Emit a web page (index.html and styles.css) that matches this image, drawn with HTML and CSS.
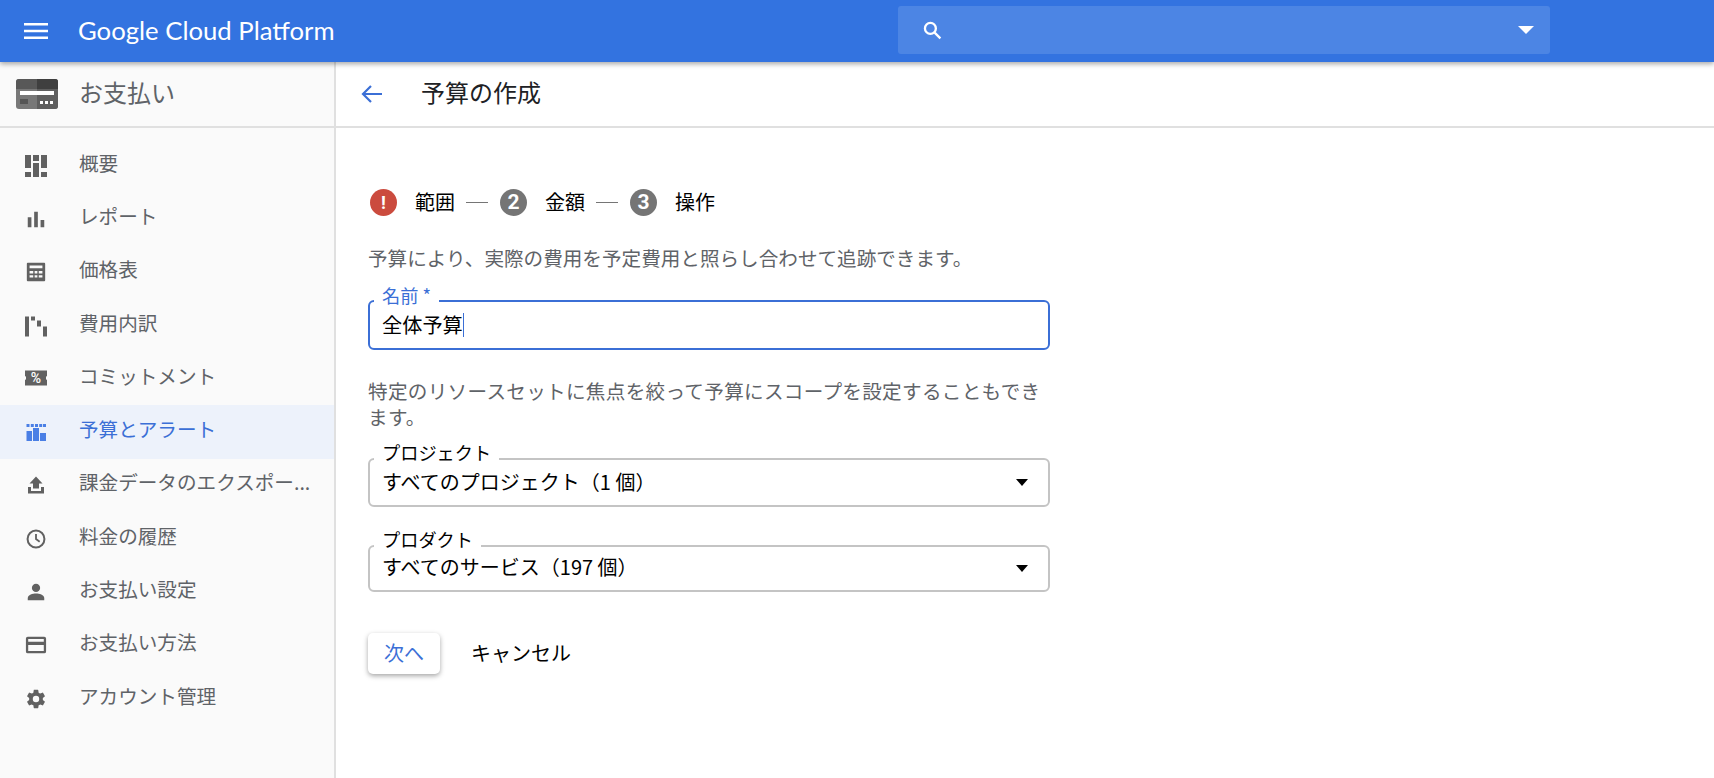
FILE: index.html
```html
<!DOCTYPE html>
<html lang="ja">
<head>
<meta charset="utf-8">
<title>予算の作成</title>
<link rel="stylesheet" href="styles.css">
</head>
<body>
<header class="topbar">
  <svg class="menu" viewBox="0 0 24 16" width="24" height="16"><path d="M0 0h24v2.400H0zM0 6.800h24v2.400H0zM0 13.600h24V16H0z" fill="#fff"/></svg>
  <div class="brand">Google Cloud Platform</div>
  <div class="search">
    <svg class="search-icon" viewBox="0 0 20 20" width="21" height="21"><circle cx="8" cy="8" r="5.200" fill="none" stroke="#fff" stroke-width="2.200"/><path d="M12 12l5.500 5.500" stroke="#fff" stroke-width="2.200"/></svg>
    <span class="caret caret-white"></span>
  </div>
</header>
<div class="body">
  <aside class="sidebar">
    <div class="side-head">
      <svg class="card" viewBox="0 0 42 30" width="42" height="30"><rect width="42" height="30" rx="3" fill="#787878"/><path d="M21 0h18a3 3 0 0 1 3 3v24a3 3 0 0 1-3 3H21z" fill="#5f5f5f"/><path d="M3 0h18v10H0V3a3 3 0 0 1 3-3z" fill="#585858"/><path d="M21 0h18a3 3 0 0 1 3 3v7H21z" fill="#3f3f3f"/><rect x="4" y="12" width="34" height="4" fill="#fff"/><rect x="4" y="20" width="8" height="5" fill="#555"/><path d="M24 22h3v3h-3zM29 22h3v3h-3zM34 22h3v3h-3z" fill="#fff"/></svg>
      <span class="side-title">お支払い</span>
    </div>
    <nav class="nav">
      <a class="nav-item"><svg class="ico" viewBox="0 0 22 22"><path d="M0 0h6v13H0zM0 17h6v5H0zM8 0h6v6H8zM8 8h6v14H8zM16 0h6v13h-6zM16 17h6v5h-6z"/></svg><span>概要</span></a>
      <a class="nav-item"><svg class="ico" viewBox="0 0 24 24"><path d="M3 10h4v11H3zM10 4h4v17h-4zM17 13h4v8h-4z"/></svg><span>レポート</span></a>
      <a class="nav-item"><svg class="ico" viewBox="0 0 24 24"><path fill-rule="evenodd" d="M3 2h18a1 1 0 0 1 1 1v18a1 1 0 0 1-1 1H3a1 1 0 0 1-1-1V3a1 1 0 0 1 1-1zM5 5v3h14V5zM5 11v2.500h4V11zM10.500 11v2.500h3V11zM15 11v2.500h4V11zM5 15.500V18h4v-2.500zM10.500 15.500V18h3v-2.500zM15 15.500V18h4v-2.500z"/></svg><span>価格表</span></a>
      <a class="nav-item"><svg class="ico" viewBox="0 0 22 22"><path d="M0 1.500h4v20H0zM6 1.500h4v4H6zM12 5.500h4v6h-4zM18 11.500h4v10h-4z"/></svg><span>費用内訳</span></a>
      <a class="nav-item"><svg class="ico" viewBox="0 0 22 22"><path d="M0 2.500h22v5.500l-1 .7v2.600l1 .7v5.500H0v-5.500l1-.7V8.700L0 8z"/><text x="11" y="15" class="ico-text">%</text></svg><span>コミットメント</span></a>
      <a class="nav-item active"><svg class="ico" viewBox="0 0 22 22"><path d="M1.500 3h3v3h-3zM5.800 3h3v3h-3zM10 3h3v3h-3zM14.200 3h3v3h-3zM18 3h3v3h-3zM1.500 10h5.500v10H1.500zM8 7h6v13H8zM15 12h6v8h-6z"/></svg><span>予算とアラート</span></a>
      <a class="nav-item"><svg class="ico" viewBox="0 0 22 22"><path d="M11 2.500L4.500 9.500H8v5h6v-5h3.500zM3 13h3v4h10v-4h3v6.500H3z"/></svg><span>課金データのエクスポー...</span></a>
      <a class="nav-item"><svg class="ico" viewBox="0 0 24 24"><circle cx="12" cy="12" r="9.200" fill="none" stroke="#616161" stroke-width="2.200"/><path d="M12 6.500V12l4 3" fill="none" stroke="#616161" stroke-width="2"/></svg><span>料金の履歴</span></a>
      <a class="nav-item"><svg class="ico" viewBox="0 0 24 24"><circle cx="12" cy="7.500" r="4.500"/><path d="M3 21v-2.500C3 15 8.500 13.500 12 13.500s9 1.500 9 5V21z"/></svg><span>お支払い設定</span></a>
      <a class="nav-item"><svg class="ico" viewBox="0 0 24 24"><path fill-rule="evenodd" d="M3 3h18a2 2 0 0 1 2 2v14a2 2 0 0 1-2 2H3a2 2 0 0 1-2-2V5a2 2 0 0 1 2-2zM3.500 5.500v3h17v-3zM3.500 12v6.500h17V12z"/></svg><span>お支払い方法</span></a>
      <a class="nav-item"><svg class="ico" viewBox="0 0 24 24"><path fill-rule="evenodd" d="M19.430 12.980c.04-.32.07-.64.07-.98s-.03-.66-.07-.98l2.110-1.650c.19-.15.240-.42.120-.64l-2-3.460c-.12-.22-.39-.3-.61-.22l-2.490 1c-.52-.4-1.080-.73-1.690-.98l-.38-2.650A.488.488 0 0 0 14 2h-4c-.25 0-.46.18-.49.42l-.38 2.650c-.61.25-1.170.59-1.690.98l-2.490-1a.566.566 0 0 0-.61.22l-2 3.460c-.13.22-.07.490.12.640l2.110 1.650c-.04.32-.07.650-.07.980s.03.660.07.980l-2.110 1.650c-.19.150-.240.420-.12.640l2 3.460c.12.220.39.300.61.220l2.490-1c.52.400 1.080.730 1.690.980l.38 2.650c.03.240.24.420.49.420h4c.25 0 .46-.18.49-.42l.38-2.650c.61-.25 1.170-.59 1.690-.98l2.490 1c.23.080.49 0 .61-.22l2-3.460c.12-.22.070-.49-.12-.64zM12 15.500a3.500 3.500 0 1 1 0-7 3.500 3.500 0 0 1 0 7z"/></svg><span>アカウント管理</span></a>
    </nav>
  </aside>
  <main class="main">
    <div class="page-head">
      <svg class="back" viewBox="0 0 24 24" width="24" height="24"><path d="M22 12H3.500M11 4l-8 8 8 8" fill="none" stroke="#3b6fd6" stroke-width="2.200"/></svg>
      <h1 class="page-title">予算の作成</h1>
    </div>
    <div class="content">
      <div class="steps">
        <span class="badge badge-error">!</span><span class="step-label">範囲</span><span class="dash"></span>
        <span class="badge">2</span><span class="step-label">金額</span><span class="dash"></span>
        <span class="badge">3</span><span class="step-label">操作</span>
      </div>
      <p class="desc">予算により、実際の費用を予定費用と照らし合わせて追跡できます。</p>
      <div class="field field-focus">
        <span class="float-label label-blue">名前 *</span>
        <span class="value">全体予算<span class="cursor"></span></span>
      </div>
      <p class="desc scope">特定のリソースセットに焦点を絞って予算にスコープを設定することもできます。</p>
      <div class="field field-project">
        <span class="float-label">プロジェクト</span>
        <span class="value">すべてのプロジェクト（1 個）</span>
        <span class="caret"></span>
      </div>
      <div class="field field-product">
        <span class="float-label">プロダクト</span>
        <span class="value">すべてのサービス（197 個）</span>
        <span class="caret"></span>
      </div>
      <div class="actions">
        <button class="btn btn-next">次へ</button>
        <button class="btn btn-cancel">キャンセル</button>
      </div>
    </div>
  </main>
</div>
</body>
</html>
```
FILE: styles.css
```css
* { box-sizing: border-box; }
html, body { margin: 0; height: 100%; overflow: hidden; }
body {
  font-family: "Noto Sans CJK JP", "Roboto", sans-serif;
  font-size: 19.6px;
  background: #fff;
  color: #000;
  display: flex;
  flex-direction: column;
}
.topbar {
  position: relative;
  z-index: 2;
  height: 62px;
  flex: none;
  background: #3373e0;
  box-shadow: 0 2px 5px rgba(0,0,0,.35);
  display: flex;
  align-items: center;
  padding-left: 24px;
}
.menu { margin-bottom: 1px; }
.brand {
  font-family: "Lato", "Roboto", sans-serif;
  font-size: 25.700px;
  color: #fff;
  margin-left: 30px;
  width: 320px;
  margin-bottom: 2px;
  white-space: nowrap;
}
.search {
  margin-left: 500px;
  width: 652px;
  height: 48px;
  margin-bottom: 2px;
  background: #4c85e4;
  border-radius: 3px;
  display: flex;
  align-items: center;
  justify-content: space-between;
  padding: 0 16px 0 24px;
}
.caret {
  width: 0; height: 0;
  border-left: 6px solid transparent;
  border-right: 6px solid transparent;
  border-top: 7px solid #000;
}
.caret-white {
  border-left-width: 8px;
  border-right-width: 8px;
  border-top: 8px solid #fff;
}
.body { flex: 1; display: flex; min-height: 0; }
.sidebar {
  width: 336px;
  flex: none;
  background: #fafafa;
  border-right: 2px solid #e0e0e0;
}
.side-head {
  height: 66px;
  border-bottom: 2px solid #e0e0e0;
  display: flex;
  align-items: center;
  padding-left: 16px;
}
.side-title {
  font-size: 24px;
  color: #5f6368;
  margin-left: 21px;
  margin-bottom: 6px;
}
.nav { padding-top: 11px; display: flex; flex-direction: column; }
.nav-item {
  height: 53.300px;
  display: flex;
  align-items: center;
  padding-left: 25px;
  color: #5f6368;
}
.nav-item span { margin-left: 32px; margin-bottom: 7px; white-space: nowrap; }
.ico { width: 22px; height: 22px; flex: none; fill: #616161; }
.ico-text { font-family: "Roboto", sans-serif; font-size: 14px; font-weight: 500; fill: #fff; text-anchor: middle; }
.active { background: #edf2fb; color: #3b6fd6; }
.active .ico { fill: #4a7fe5; }
.main { flex: 1; min-width: 0; }
.page-head {
  height: 66px;
  border-bottom: 2px solid #e0e0e0;
  display: flex;
  align-items: center;
  padding-left: 24px;
}
.back { flex: none; }
.page-title {
  font-size: 24px;
  font-weight: 400;
  margin: 0 0 6px 37px;
  color: #202124;
}
.content { padding: 60px 0 0 32px; width: 714px; }
.steps { display: flex; align-items: center; height: 28px; margin-left: 2px; }
.badge {
  width: 27px; height: 27px;
  border-radius: 50%;
  background: #757575;
  color: #fff;
  font-family: "Roboto", sans-serif;
  font-weight: 700;
  font-size: 21px;
  display: flex; align-items: center; justify-content: center;
}
.badge-error { background: #cb4b3e; font-size: 18px; }
.step-label { margin-left: 18px; line-height: 28px; margin-bottom: 1px; font-size: 20px; }
.dash { width: 22px; height: 1px; background: #757575; margin: 0 12px 0 11px; }
.desc {
  margin: 0;
  color: #5f6368;
  line-height: 27px;
}
.steps + .desc { margin-top: 28px; }
.field {
  position: relative;
  width: 682px;
  border: 2px solid #c4c4c4;
  border-radius: 6px;
  display: flex;
  align-items: center;
  justify-content: space-between;
  padding: 0 20px 0 13px;
}
.field-focus { border-color: #3b6fd6; height: 50px; margin-top: 29px; }
.field-project { height: 49px; margin-top: 28px; }
.field-product { height: 47.500px; margin-top: 37.500px; }
.float-label {
  position: absolute;
  top: -21px;
  left: 4px;
  padding: 0 8px;
  font-size: 18.200px;
  line-height: 26px;
  height: 26px;
  background: linear-gradient(to bottom, transparent 0, transparent 18px, #fff 18px);
}
.label-blue { color: #3b6fd6; top: -20px; background: linear-gradient(to bottom, transparent 0, transparent 17px, #fff 17px); }
.value { font-size: 20px; margin-bottom: 2px; margin-left: -1px; line-height: 26px; white-space: nowrap; display: flex; align-items: center; }
.field-focus .value { font-size: 20.200px; margin-bottom: 0; }
.cursor { display: inline-block; width: 1.500px; height: 24px; background: #3b6fd6; }
.scope { margin-top: 28px; line-height: 26px; letter-spacing: .3px; width: 680px; }
.actions { display: flex; align-items: center; margin-top: 41px; }
.btn {
  font: inherit;
  font-size: 20px;
  border: 0;
  background: #fff;
  height: 41px;
  cursor: pointer;
  padding: 0 16px 2px;
}
.btn-next {
  width: 72px;
  color: #3b6fd6;
  border-radius: 5px;
  box-shadow: 0 2px 5px rgba(0,0,0,.35);
}
.btn-cancel { margin-left: 15px; color: #000; }
```
